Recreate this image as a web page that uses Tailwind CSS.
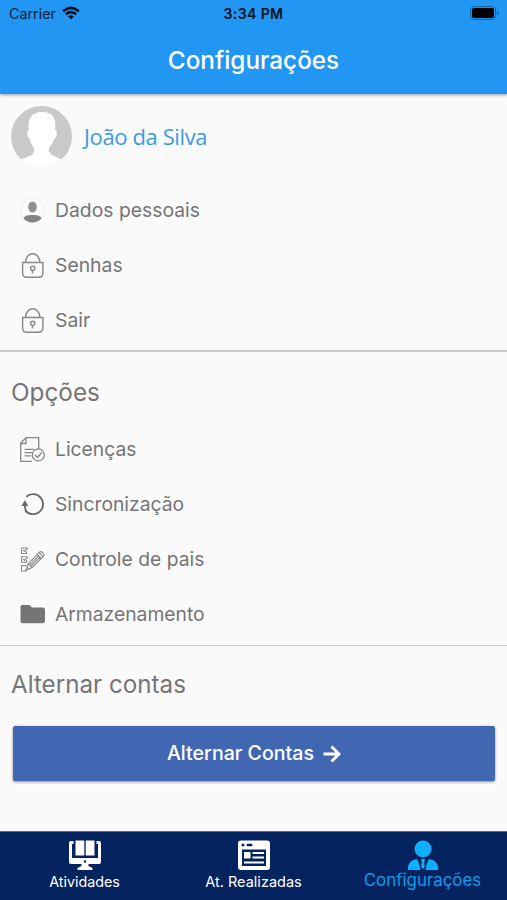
<!DOCTYPE html>
<html lang="pt-BR">
<head>
<meta charset="utf-8">
<title>Configurações</title>
<script src="https://cdn.jsdelivr.net/npm/@tailwindcss/browser@4"></script>
</head>
<body class="w-[507px] h-[900px] overflow-hidden bg-[#fafafa] flex flex-col font-['Inter',sans-serif] text-[#757575]">
<header class="relative z-10 h-[94px] shrink-0 bg-[#2196f3] shadow-[0_1px_3px_rgba(0,0,0,0.4)]">
  <div class="grid grid-cols-3 h-[27px] items-center px-[9px] text-[#08213a]">
    <div class="flex items-center gap-[6px] text-[14.300px]"><span>Carrier</span>
      <svg class="w-[18px] h-[14px] -mt-px" viewBox="0 0 19 14" fill="none" stroke="#03101c" stroke-width="2.7"><path d="M1.2 5.1Q9.5-2 17.8 5.1M4.1 8.3Q9.5 3.8 14.9 8.3"/><path d="M6.5 10.7Q9.5 8.2 12.5 10.7L9.5 13.6Z" fill="#03101c" stroke="none"/></svg>
    </div>
    <div class="text-center text-[14px] font-semibold tracking-[0.400px] text-[#03101c]">3:34 PM</div>
    <svg class="justify-self-end w-[30px] h-[14px] mr-[-2px] -mt-px" viewBox="0 0 30 14"><rect x=".6" y=".6" width="25" height="12.8" rx="3.5" fill="none" stroke="#14619f"/><rect x="2" y="2" width="22" height="10" rx="2" fill="#000"/><path d="M27.2 4.8Q30.4 7 27.2 9.2Z" fill="#14619f"/></svg>
  </div>
  <h1 class="h-[66px] flex items-center justify-center text-[24.300px] font-medium text-white">Configurações</h1>
</header>
<main class="flex-1 flex flex-col">
  <section class="h-[257px] shrink-0">
    <div class="flex items-center h-[89px] pl-[11px] gap-[12px]">
      <svg class="w-[61px] h-[61px] mb-[4px]" viewBox="0 0 61 61"><defs><clipPath id="a"><circle cx="30.500" cy="30.500" r="30.500"/></clipPath></defs><g clip-path="url(#a)"><path fill="#c7c9cb" d="M0 0h61v61H0z"/><path fill="#fff" d="M31 6C21 6 16 12 18 24C15 24 16 32 19 33Q20 39 23 42C24 50 18 50 11 53L5 56V61H56V56L50 53C43 50 37 49 38 42Q42 38 43 33C46 32 47 24 44 24C46 11 41 6 31 6Z"/></g></svg>
      <span class="mb-[5px] text-[22px] tracking-[-0.380px] font-['Open_Sans',sans-serif] text-[#3d9ae2]">João da Silva</span>
    </div>
    <ul class="text-[19.350px]">
      <li class="h-[55px] flex items-center pl-[20px] gap-[10px]"><svg class="w-[25px] h-[25px]" viewBox="0 0 25 25"><circle cx="12.500" cy="12.500" r="12" fill="#fcfcfc" stroke="#eee"/><ellipse cx="12.500" cy="9" rx="4.300" ry="5.500" fill="#909090"/><path d="M3.500 20.500C5 17 9 17 12.500 17S20 17 21.500 20.500Q17.500 24.500 12.500 24.500T3.500 20.500Z" fill="#858585"/></svg><span>Dados pessoais</span></li>
      <li class="h-[55px] flex items-center pl-[20px] gap-[10px]"><svg class="w-[25px] h-[25px] -mt-px" viewBox="0 0 25 25" fill="none" stroke="#888" stroke-width="1.400"><path d="M2.600 9.500H22.900V20Q22.900 24.300 18.600 24.300H6.900Q2.600 24.300 2.600 20ZM5.500 9.500C5.800-2.100 19.500-2.100 19.900 9.500"/><circle cx="12.700" cy="15.300" r="2.100"/><path d="M12.500 17.300V20.500"/></svg><span>Senhas</span></li>
      <li class="h-[55px] flex items-center pl-[20px] gap-[10px]"><svg class="w-[25px] h-[25px] -mt-px" viewBox="0 0 25 25" fill="none" stroke="#888" stroke-width="1.400"><path d="M2.600 9.500H22.900V20Q22.900 24.300 18.600 24.300H6.900Q2.600 24.300 2.600 20ZM5.500 9.500C5.800-2.100 19.500-2.100 19.900 9.500"/><circle cx="12.700" cy="15.300" r="2.100"/><path d="M12.500 17.300V20.500"/></svg><span>Sair</span></li>
    </ul>
  </section>
  <section class="h-[294px] shrink-0 border-t-2 border-[#cbcbcb] -mt-px mb-px">
    <h2 class="h-[70px] pt-[11px] pl-[11px] flex items-center text-[24.300px]">Opções</h2>
    <ul class="text-[19.300px]">
      <li class="h-[55px] flex items-center pl-[20px] gap-[10px]"><svg class="w-[25px] h-[25px]" viewBox="0 0 25 25" fill="none" stroke="#888" stroke-width="1.300"><path d="M12 24.300H.7V6L6 .7H18.700V12M.7 6.500H6V.7M4.500 12.300H14M4.500 15.600H12M4.500 18.900H11"/><circle cx="18.300" cy="17.900" r="6"/><path d="M15 18L17.500 20.500L21.800 15.500" stroke-width="1.500"/></svg><span>Licenças</span></li>
      <li class="h-[55px] flex items-center pl-[20px] gap-[10px]"><svg class="w-[25px] h-[25px]" viewBox="0 0 25 25"><path d="M6.300 4.800A10 10 0 1 1 5.200 18.300" fill="none" stroke="#666" stroke-width="1.900"/><path d="M4.900 8.200L8.300 14H1.500Z" fill="#666"/><path d="M4.700 13Q4.800 16 6.200 19" stroke="#666" stroke-width="1.800" fill="none"/></svg><span>Sincronização</span></li>
      <li class="h-[55px] flex items-center pl-[20px] gap-[10px]"><svg class="w-[25px] h-[25px]" viewBox="0 0 25 25" fill="none" stroke="#8c8c8c" stroke-width="1.100"><path d="M7.500 1H1.500V6.500H6.500V4.200M3 3L4.500 4.500L8 .8M7.500 9.800H1.500V15.300H6.500V13M3 12L4.500 13.500L8 9.800M6.500 18.600H1.500V24H6V22"/><path d="M6 23.500L8 16.700L19.300 5.300Q20.500 4 22 5L23.600 6.800Q24.600 8 23.400 9.300L12 20.500ZM8 16.700L12 20.500M17.200 7.500L21.200 11.500M9.800 17.500L18.700 8.800M11 19L20 10.200M7.300 20L9 22M19 5.600L23 9.700"/></svg><span>Controle de pais</span></li>
      <li class="h-[55px] flex items-center pl-[20px] gap-[10px]"><svg class="w-[25px] h-[25px]" viewBox="0 0 25 25"><path fill="#757575" d="M2.200 3H9.500L12 5.500H22.800Q25 5.500 25 7.700V19Q25 21.200 22.800 21.200H2.700Q.5 21.200 .5 19V5Q.5 3 2.200 3Z"/></svg><span>Armazenamento</span></li>
    </ul>
  </section>
  <section class="border-t border-[#cfcfcf]">
    <h2 class="h-[80px] pb-[2px] pl-[11px] flex items-center text-[24.200px]">Alternar contas</h2>
    <button class="ml-[13px] w-[482px] h-[55px] rounded-[2px] bg-[#4267b2] shadow-[0_1px_3px_rgba(0,0,0,0.45)] text-white text-[19.600px] font-medium flex items-center justify-center gap-[9px]"><span>Alternar Contas</span><svg class="w-[18px] h-[18px]" viewBox="0 0 18 18" fill="none" stroke="#fff" stroke-width="2.900"><path d="M.5 9H16M8.500 1.500L16 9L8.500 16.500"/></svg></button>
  </section>
</main>
<nav class="h-[69px] shrink-0 grid grid-cols-3 bg-[#05235f] border-t border-[#51658e] text-white text-[14.300px]">
  <div class="flex flex-col items-center pt-[8px]"><svg class="w-[34px] h-[31px]" viewBox="0 0 34 31"><path fill="#fff" d="M1 3Q1 1 3 1H5.500V4H4V18H30V4H28.500V1H31Q33 1 33 3V22Q33 24 31 24H20.500V26L24.500 28V30H9.500V28L13.500 26V24H3Q1 24 1 22ZM7.500 .5H16.300V15.500H7.500ZM17.700 .5H26.500V15.500H17.700Z"/><circle cx="17" cy="21.500" r="1.200" fill="#05235f"/></svg><span class="leading-[20px] mt-[1px]">Atividades</span></div>
  <div class="flex flex-col items-center pt-[8px]"><svg class="w-[32px] h-[31px]" viewBox="0 0 32 31"><rect y=".5" width="32" height="29.500" rx="3" fill="#fff"/><g fill="#05235f"><circle cx="5" cy="5" r="1.500"/><rect x="8.500" y="3.700" width="6" height="2.600" rx="1.300"/><path d="M4 9.500H28V26H4Z"/></g><g fill="#fff"><path d="M6 12H12.500V18.500H6ZM14.500 12H26V14H14.500ZM14.500 16.500H26V18.500H14.500ZM6 21.500H26V23.500H6Z"/></g></svg><span class="leading-[20px] mt-[1px] text-[14.500px]">At. Realizadas</span></div>
  <div class="flex flex-col items-center pt-[8px] text-[#0d9deb]"><svg class="w-[30px] h-[31px]" viewBox="0 0 30 31" fill="#0cb0ff"><circle cx="15" cy="9" r="8.500"/><path d="M0 30V27Q1 20 9 19Q12 24 12.500 30ZM30 30V27Q29 20 21 19Q18 24 17.500 30ZM13 19H17L16.300 22L16.800 27L15 29L13.200 27L13.700 22Z"/></svg><span class="text-[16.900px] leading-[20px] -mt-px">Configurações</span></div>
</nav>
</body>
</html>
